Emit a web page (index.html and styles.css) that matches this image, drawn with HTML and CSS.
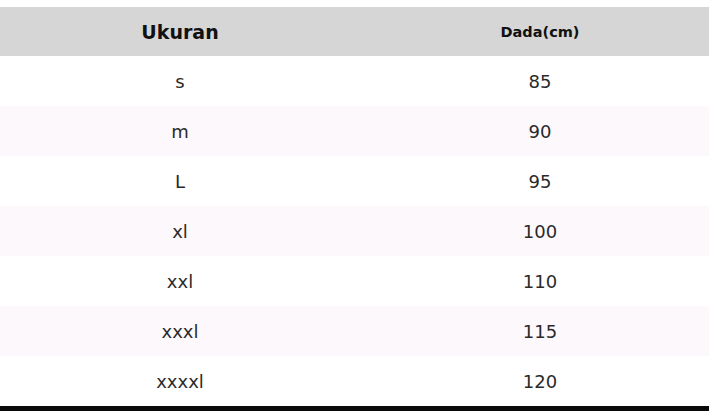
FILE: index.html
```html
<!DOCTYPE html>
<html lang="id">
<head>
<meta charset="utf-8">
<title>Ukuran</title>
<link rel="stylesheet" href="styles.css">
</head>
<body>
<div class="page">
  <div class="table">
    <div class="row head"><div class="cell c1">Ukuran</div><div class="cell c2">Dada(cm)</div></div>
    <div class="row"><div class="cell">s</div><div class="cell">85</div></div>
    <div class="row alt"><div class="cell">m</div><div class="cell">90</div></div>
    <div class="row"><div class="cell">L</div><div class="cell">95</div></div>
    <div class="row alt"><div class="cell">xl</div><div class="cell">100</div></div>
    <div class="row"><div class="cell">xxl</div><div class="cell">110</div></div>
    <div class="row alt"><div class="cell">xxxl</div><div class="cell">115</div></div>
    <div class="row"><div class="cell">xxxxl</div><div class="cell">120</div></div>
  </div>
  <div class="bar"></div>
</div>
</body>
</html>
```
FILE: styles.css
```css
html, body {
  margin: 0;
  padding: 0;
  background: #ffffff;
  overflow: hidden;
}
.page {
  width: 709px;
  height: 411px;
  display: flex;
  flex-direction: column;
  padding-top: 7px;
  box-sizing: border-box;
  overflow: hidden;
  font-family: "DejaVu Sans", sans-serif;
  color: #2a2a2a;
}
.table {
  display: flex;
  flex-direction: column;
  width: 720px;
}
.row {
  display: grid;
  grid-template-columns: 360px 360px;
  height: 50px;
  background: #ffffff;
}
.row.alt {
  background: #fdf8fb;
}
.row.head {
  height: 49px;
  background: #d6d6d6;
  color: #111111;
  font-weight: bold;
}
.cell {
  display: flex;
  align-items: center;
  justify-content: center;
  font-size: 18px;
}
.head .c1 {
  font-size: 19px;
}
.head .c2 {
  font-size: 14.5px;
}
.bar {
  flex: 1;
  background: #0a0a0a;
}
```
